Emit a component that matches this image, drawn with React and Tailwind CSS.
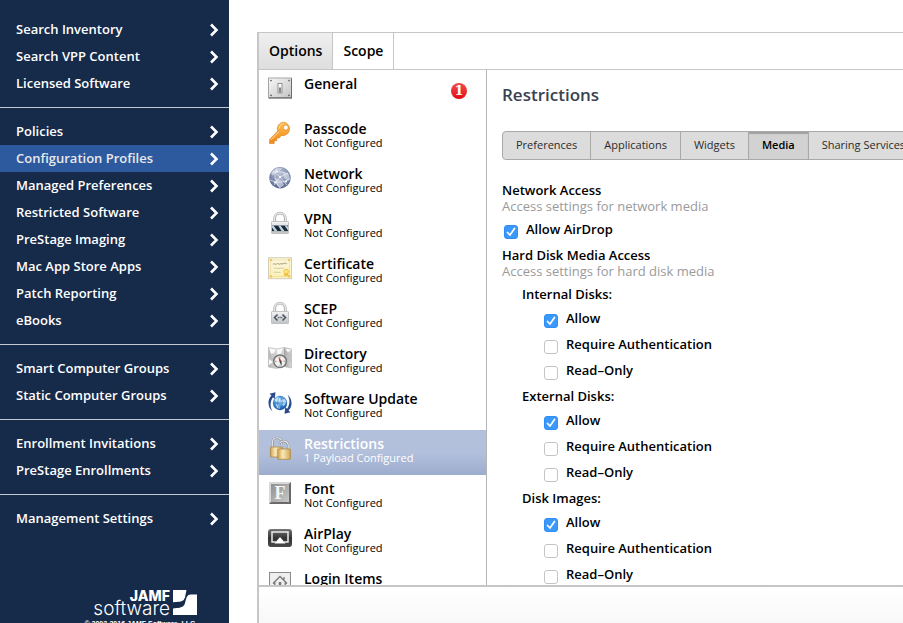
import { useState } from "react";

const menuGroups = [
  ["Search Inventory", "Search VPP Content", "Licensed Software"],
  [
    "Policies",
    "Configuration Profiles",
    "Managed Preferences",
    "Restricted Software",
    "PreStage Imaging",
    "Mac App Store Apps",
    "Patch Reporting",
    "eBooks",
  ],
  ["Smart Computer Groups", "Static Computer Groups"],
  ["Enrollment Invitations", "PreStage Enrollments"],
  ["Management Settings"],
];

function GeneralIcon() {
  return (
    <svg viewBox="0 0 24 24" className="size-6 shrink-0" aria-hidden="true">
      <defs>
        <linearGradient id="plate" x1="0" y1="0" x2="1" y2="1">
          <stop offset="0" stopColor="#f7f7f7" />
          <stop offset="1" stopColor="#c4c4c4" />
        </linearGradient>
      </defs>
      <rect x="0.5" y="2" width="23" height="20" fill="url(#plate)" stroke="#a5a5a5" />
      <path d="M1 21.8h22.6V2.5" fill="none" stroke="#6d6d6d" strokeWidth="1.2" />
      <g fill="#555">
        <circle cx="3" cy="4.6" r="0.8" />
        <circle cx="21" cy="4.6" r="0.8" />
        <circle cx="3" cy="19.4" r="0.8" />
        <circle cx="21" cy="19.4" r="0.8" />
      </g>
      <rect x="10" y="7.5" width="4" height="9.5" fill="#fafafa" stroke="#8d8d8d" strokeWidth="0.9" />
      <rect x="10.8" y="11.5" width="2.4" height="5" fill="#8a8a8a" />
    </svg>
  );
}

function KeyIcon() {
  return (
    <svg viewBox="0 0 24 24" className="size-6 shrink-0" aria-hidden="true">
      <defs>
        <linearGradient id="key" x1="0" y1="0" x2="0" y2="1">
          <stop offset="0" stopColor="#fdc04e" />
          <stop offset="1" stopColor="#f0861b" />
        </linearGradient>
      </defs>
      <path
        fillRule="evenodd"
        d="M16.2 1.2a6.7 6.7 0 0 0-6.500 8.9L1.6 18.4v4.2h4.6v-2.9h2.6v-2.7h2.4l2.1-2.500a6.800 6.800 0 1 0 2.9-13.300zM17.8 4a2.500 2.500 0 1 1 0 5 2.500 2.500 0 0 1 0-5z"
        fill="url(#key)"
        stroke="#d9791a"
        strokeWidth="0.6"
      />
      <path d="M11 7.6c.3-2.6 2.4-4.6 4.8-4.8M2.8 18.900l8-8" fill="none" stroke="#ffe0a0" strokeWidth="1" />
    </svg>
  );
}

function NetworkIcon() {
  return (
    <svg viewBox="0 0 24 24" className="size-6 shrink-0" aria-hidden="true">
      <defs>
        <radialGradient id="globe" cx="0.5" cy="0.3" r="0.7">
          <stop offset="0" stopColor="#b9c2d6" />
          <stop offset="0.6" stopColor="#8390b2" />
          <stop offset="1" stopColor="#55648e" />
        </radialGradient>
      </defs>
      <circle cx="12" cy="11.7" r="10.7" fill="url(#globe)" />
      <path d="M3.500 6c3-4 8-4.500 11-3.500l-3 2.500-4 1-3 4zM15 6l5 2 2 4-2 3-4-3zM8 12l5 2 3 5-4 3-4-4z" fill="#dfe4ee" opacity="0.6" />
      <g fill="none" stroke="#eef1f7" strokeWidth="0.7">
        <path d="M3 8c5-3 12-3 18 1M2 14c6 3 13 3 20-1M9 2c-4 5-2 14 3 20" />
        <path d="M5 5l7 6 8-4M12 11l-6 8M12 11l7 8" />
      </g>
      <g fill="#fff">
        <circle cx="9" cy="5.500" r="1" />
        <circle cx="12" cy="11" r="1" />
        <circle cx="7" cy="16.500" r="1" />
        <circle cx="18" cy="15.500" r="1" />
      </g>
    </svg>
  );
}

function LockIcon({ children }) {
  return (
    <svg viewBox="0 0 24 24" className="size-6 shrink-0" aria-hidden="true">
      <defs>
        <linearGradient id="lockBody" x1="0" y1="0" x2="0" y2="1">
          <stop offset="0" stopColor="#f4f4f4" />
          <stop offset="1" stopColor="#bfc1c4" />
        </linearGradient>
      </defs>
      <path d="M6.700 11V7.500a5.300 5.300 0 0 1 10.600 0V11" fill="none" stroke="#a9a9a9" strokeWidth="2.800" />
      <path d="M6.500 11V7.500a5.500 5.500 0 0 1 11 0V11" fill="none" stroke="#e6e6e6" strokeWidth="1.400" />
      <rect x="3.500" y="10.500" width="17" height="12" rx="0.600" fill="url(#lockBody)" stroke="#b8b8b8" strokeWidth="0.800" />
      {children}
    </svg>
  );
}

function VpnIcon() {
  return (
    <LockIcon>
      <rect x="4" y="14.500" width="16" height="5.600" fill="#20262e" />
      <path d="M4 14.500h1.500l4 5.600H6.500L4 16.500zM10 14.500h2.500l4 5.600h-3zM16.500 14.500H19l1 1.600v3.500z" fill="#b9d6ee" />
    </LockIcon>
  );
}

function ScepIcon() {
  return (
    <LockIcon>
      <path d="M9.500 13.500L6.500 16.500l3 3M14.500 13.500l3 3-3 3" fill="none" stroke="#46505c" strokeWidth="1.500" />
      <path d="M9.800 16.500h1M11.600 16.500h1M13.400 16.500h1" stroke="#46505c" strokeWidth="1.400" />
    </LockIcon>
  );
}

function CertificateIcon() {
  return (
    <svg viewBox="0 0 24 24" className="size-6 shrink-0" aria-hidden="true">
      <defs>
        <linearGradient id="paper" x1="0" y1="0" x2="0" y2="1">
          <stop offset="0" stopColor="#fdf8e2" />
          <stop offset="1" stopColor="#fbf0b4" />
        </linearGradient>
      </defs>
      <rect x="0.500" y="1.700" width="23" height="21" fill="url(#paper)" stroke="#d3ceb9" />
      <rect x="2.700" y="3.900" width="18.600" height="16.600" fill="none" stroke="#efd998" strokeWidth="0.700" />
      <g fill="#ecc865">
        <circle cx="2.900" cy="4" r="1.300" />
        <circle cx="21.100" cy="4" r="1.300" />
        <circle cx="2.900" cy="20.400" r="1.300" />
        <circle cx="21.100" cy="20.400" r="1.300" />
      </g>
      <path d="M5 8.500c1-2.500 2 1 3.500-.5s2 1 3.500 0 2.500.8 4-.6 1.500.8 3 .3" fill="none" stroke="#9c9277" strokeWidth="0.900" />
      <path d="M6 12.300c2-.8 3 .6 5 0s3 .4 5-.2M5.500 16.300c2-.6 4 .5 7 0" fill="none" stroke="#c9bf9d" strokeWidth="0.800" />
      <path d="M16.500 17l-.8 3 1.500-.5 1.200.8 1-.8 1.300.4-.7-2.900z" fill="#f0bd3a" />
      <circle cx="18.200" cy="15.600" r="2.400" fill="#fde27c" stroke="#edba3c" strokeWidth="0.800" />
    </svg>
  );
}

function DirectoryIcon() {
  return (
    <svg viewBox="0 0 24 24" className="size-6 shrink-0" aria-hidden="true">
      <defs>
        <linearGradient id="mapFold" x1="0" y1="0" x2="1" y2="0">
          <stop offset="0" stopColor="#b5b5b5" />
          <stop offset="0.350" stopColor="#d6d6d6" />
          <stop offset="0.360" stopColor="#f1f1f1" />
          <stop offset="0.680" stopColor="#cfcfcf" />
          <stop offset="0.690" stopColor="#a9a9a9" />
          <stop offset="1" stopColor="#d9d9d9" />
        </linearGradient>
      </defs>
      <path d="M.5 1.500L8.500 3 16 1.500 23.500 3v19L16 20.500 8.500 22.500.5 21z" fill="url(#mapFold)" stroke="#b0b0b0" strokeWidth="0.600" />
      <path d="M1 2l7 1.500L6 7 3 8zM9 4l6-2-2 5-3 2zM17 2.500l6 1-3 3zM1 13l4 3-4 3z" fill="#fafafa" />
      <path d="M19 9l4-3v11l-3-3z" fill="#c3c3c3" />
      <circle cx="12" cy="15.300" r="6.300" fill="#f1f1f1" stroke="#777" strokeWidth="1.500" />
      <path d="M12 10.300v1.500M12 18.800v1.500M7 15.300h1.500M15.500 15.300H17" stroke="#777" strokeWidth="0.800" />
      <path d="M10.500 10.800l3 4-2.200.8z" fill="#d6302e" />
      <path d="M13.700 20l-2.400-4.400 2.200-.8z" fill="#3d3d3d" />
    </svg>
  );
}

function UpdateIcon() {
  return (
    <svg viewBox="0 0 24 24" className="size-6 shrink-0" aria-hidden="true">
      <defs>
        <radialGradient id="updateGlobe" cx="0.45" cy="0.35" r="0.7">
          <stop offset="0" stopColor="#c4e6fb" />
          <stop offset="0.5" stopColor="#4a9be0" />
          <stop offset="1" stopColor="#0c3f94" />
        </radialGradient>
      </defs>
      <circle cx="12" cy="12" r="7.200" fill="url(#updateGlobe)" />
      <path d="M6.500 9l3-3 3 1-1 3-3 1zM13 9l4-1 1.500 4-3 3-2-2zM8 13l3 1 1 4-3-1z" fill="#e3f4fd" opacity="0.750" />
      <path d="M5 12h14M12 5c-3 4-3 10 0 14M12 5c3 4 3 10 0 14" fill="none" stroke="#2360ad" strokeWidth="0.500" />
      <path d="M7.500 1.300L1.500 2.800l2 1.600C-.8 8.500-.6 16 4.500 20.500 1.800 15.700 2 10.500 5 6.200l1.700 1.700z" fill="#2b4a8b" />
      <path d="M16.500 22.700l6-1.500-2-1.600c4.300-4.100 4.100-11.600-1-16.100 2.700 4.800 2.500 10-.5 14.300l-1.700-1.700z" fill="#2b4a8b" />
    </svg>
  );
}

function RestrictionsIcon() {
  return (
    <svg viewBox="0 0 24 24" className="size-6 shrink-0" aria-hidden="true">
      <defs>
        <linearGradient id="brass" x1="0" y1="0" x2="1" y2="0">
          <stop offset="0" stopColor="#cfa352" />
          <stop offset="0.4" stopColor="#fae8b8" />
          <stop offset="1" stopColor="#d3a556" />
        </linearGradient>
      </defs>
      <path d="M4.500 12V6.500a4.500 4.500 0 0 1 9 0V9" fill="none" stroke="#8b8d91" strokeWidth="2.200" />
      <path d="M4.300 12V6.500a4.700 4.700 0 0 1 9.400 0V9" fill="none" stroke="#e9eaec" strokeWidth="1.100" />
      <rect x="2.400" y="11" width="12" height="10" rx="0.600" fill="url(#brass)" stroke="#ab8138" strokeWidth="0.700" />
      <path d="M11.500 7.500a4.500 4.500 0 0 1 8.500 2V14" fill="none" stroke="#8b8d91" strokeWidth="2.200" />
      <path d="M11.500 7.300a4.700 4.700 0 0 1 8.700 2V14" fill="none" stroke="#e9eaec" strokeWidth="1.100" />
      <rect x="9.800" y="13" width="12.600" height="10.300" rx="0.600" fill="url(#brass)" stroke="#ab8138" strokeWidth="0.700" />
    </svg>
  );
}

function FontIcon() {
  return (
    <svg viewBox="0 0 24 24" className="size-6 shrink-0" aria-hidden="true">
      <defs>
        <linearGradient id="fontTile" x1="0" y1="0" x2="1" y2="1">
          <stop offset="0" stopColor="#8f8f8f" />
          <stop offset="1" stopColor="#c9c9c9" />
        </linearGradient>
      </defs>
      <path d="M1 1h22v22H1z" fill="#d8d8d8" />
      <path d="M23 1v22H1l2-2h18V3z" fill="#6a6a6a" />
      <rect x="3" y="3" width="18" height="18" fill="url(#fontTile)" />
      <text x="12" y="18" textAnchor="middle" fontFamily="Liberation Serif, serif" fontWeight="700" fontSize="18" fill="#f5f5f5">
        F
      </text>
    </svg>
  );
}

function AirPlayIcon() {
  return (
    <svg viewBox="0 0 24 24" className="size-6 shrink-0" aria-hidden="true">
      <defs>
        <linearGradient id="airplay" x1="0" y1="0" x2="0" y2="1">
          <stop offset="0" stopColor="#777" />
          <stop offset="0.5" stopColor="#333" />
          <stop offset="1" stopColor="#4a4a4a" />
        </linearGradient>
      </defs>
      <rect x="0" y="3" width="24" height="18" rx="3" fill="url(#airplay)" />
      <path d="M8 16H4V6h16v10h-4" fill="none" stroke="#ececec" strokeWidth="1.500" />
      <path d="M12 11l5.500 6.500h-11z" fill="#fff" />
    </svg>
  );
}

function LoginIcon() {
  return (
    <svg viewBox="0 0 24 24" className="size-6 shrink-0" aria-hidden="true">
      <rect x="1.500" y="1.500" width="21" height="21" fill="#efefef" stroke="#8a8a8a" />
      <path d="M5 12.500l7-7 7 7M6.800 11v8h10.400v-8M16 9.500V6" fill="none" stroke="#7a7a7a" strokeWidth="1.300" />
      <rect x="10.700" y="11" width="2.600" height="8" fill="#7a7a7a" />
    </svg>
  );
}

const payloads = [
  { name: "General", Icon: GeneralIcon, alerts: 1 },
  { name: "Passcode", status: "Not Configured", Icon: KeyIcon },
  { name: "Network", status: "Not Configured", Icon: NetworkIcon },
  { name: "VPN", status: "Not Configured", Icon: VpnIcon },
  { name: "Certificate", status: "Not Configured", Icon: CertificateIcon },
  { name: "SCEP", status: "Not Configured", Icon: ScepIcon },
  { name: "Directory", status: "Not Configured", Icon: DirectoryIcon },
  { name: "Software Update", status: "Not Configured", Icon: UpdateIcon },
  { name: "Restrictions", status: "1 Payload Configured", Icon: RestrictionsIcon },
  { name: "Font", status: "Not Configured", Icon: FontIcon },
  { name: "AirPlay", status: "Not Configured", Icon: AirPlayIcon },
  { name: "Login Items", status: "Not Configured", Icon: LoginIcon },
];

const restrictionTabs = ["Preferences", "Applications", "Widgets", "Media", "Sharing Services"];
const diskGroups = ["Internal Disks:", "External Disks:", "Disk Images:"];

function Sidebar() {
  return (
    <aside className="flex w-[229px] shrink-0 flex-col overflow-hidden bg-[#162a4a] text-white">
      <nav className="pt-1.5">
        {menuGroups.map((group) => (
          <ul key={group[0]} className="border-b border-[#c3cad4] py-2.5 last:border-b-0">
            {group.map((item) => (
              <li key={item}>
                <a
                  href="#"
                  className={`flex h-[27px] items-center justify-between pr-2.5 pl-4 text-[13px] font-semibold ${
                    item === "Configuration Profiles" ? "bg-[#2d5a9f] text-[#e9e9ea]" : ""
                  }`}
                >
                  {item}
                  <svg viewBox="0 0 10 14" className="h-3.5 w-2.5" aria-hidden="true">
                    <path d="M2 1.500L7.500 7 2 12.500" fill="none" stroke="#fff" strokeWidth="2.600" />
                  </svg>
                </a>
              </li>
            ))}
          </ul>
        ))}
      </nav>

      {/* logo */}
      <div className="mt-12 mr-8 flex shrink-0 flex-col items-end">
        <div className="flex items-end gap-[3px]">
          <div className="flex flex-col items-end">
            <span className="font-[Inter,sans-serif] text-[14px] leading-[12px] font-extrabold">JAMF</span>
            <span className="font-[Inter,sans-serif] text-[19px] leading-[13px] font-light">software</span>
          </div>
          <svg viewBox="0 0 24 25" className="h-[25px] w-6" aria-hidden="true">
            <path d="M0 0h13.500c-1 4-1 6.500-2 8.500-1 2.200-2.500 3-5.500 3.300L0 12.300z" fill="#fff" />
            <path d="M24 4.500V25H0v-6.500c5-.5 9-.5 11-3.200 2-2.800 1.500-8.300 4.500-10.300 1-.6 5-.5 8.500-.5z" fill="#fff" />
          </svg>
        </div>
        <p className="mt-1 font-['Liberation_Sans',sans-serif] text-[7px] leading-[10px] font-bold whitespace-nowrap">
          © 2002-2016 JAMF Software, LLC.
        </p>
      </div>
    </aside>
  );
}

function PayloadItem({ payload, selected, onSelect }) {
  const { name, status, Icon, alerts } = payload;
  return (
    <button
      type="button"
      onClick={onSelect}
      className={`flex h-[45px] w-full shrink-0 items-start gap-3 pr-[19px] pl-[9px] text-left ${
        selected ? "bg-linear-to-b from-[#b2c0dc] from-50% to-[#9dadce] text-white" : "text-black"
      }`}
    >
      <span className="pt-1.5">
        <Icon />
      </span>
      <span className="flex flex-1 flex-col pt-[7px]">
        <span className="text-sm leading-[14px] font-semibold">{name}</span>
        {status && <span className="text-[11px] leading-[13px]">{status}</span>}
      </span>
      {alerts && (
        <span className="mt-[13px] flex size-4 items-center justify-center rounded-full bg-linear-to-b from-[#f0484c] to-[#e0000a] font-['DejaVu_Serif',serif] text-[13px] leading-4 font-bold text-white">
          {alerts}
        </span>
      )}
    </button>
  );
}

function CheckRow({ label, defaultChecked }) {
  return (
    <label className="flex h-[26px] items-center gap-2 text-[13px] font-semibold">
      <span className="mt-[3px] grid size-3.5 shrink-0">
        <input
          type="checkbox"
          defaultChecked={defaultChecked}
          className="peer col-start-1 row-start-1 size-3.5 appearance-none rounded-[3px] border border-[#c4c4c4] bg-white checked:border-[#2f8df5] checked:bg-[#3b99fc]"
        />
        <svg
          viewBox="0 0 14 14"
          className="pointer-events-none invisible col-start-1 row-start-1 size-3.5 peer-checked:visible"
          aria-hidden="true"
        >
          <path d="M3.500 7.500L6 10l4.500-6.500" fill="none" stroke="#fff" strokeWidth="1.700" strokeLinecap="round" />
        </svg>
      </span>
      {label}
    </label>
  );
}

function MediaSettings() {
  return (
    <div className="pt-[22px]">
      <h3 className="text-[13px] leading-4 font-semibold">Network Access</h3>
      <p className="text-[13px] leading-4 text-[#9a9a9a]">Access settings for network media</p>
      <div className="pt-[3px] pb-1 pl-0.5">
        <CheckRow label="Allow AirDrop" defaultChecked />
      </div>

      <h3 className="text-[13px] leading-4 font-semibold">Hard Disk Media Access</h3>
      <p className="text-[13px] leading-4 text-[#9a9a9a]">Access settings for hard disk media</p>
      <div className="pt-[3px] pl-5">
        {diskGroups.map((group) => (
          <fieldset key={group}>
            <legend className="h-6 text-[13px] leading-6 font-semibold">{group}</legend>
            <div className="pl-[22px]">
              <CheckRow label="Allow" defaultChecked />
              <CheckRow label="Require Authentication" />
              <CheckRow label="Read–Only" />
            </div>
          </fieldset>
        ))}
      </div>
    </div>
  );
}

export default function App() {
  const [selected, setSelected] = useState("Restrictions");
  const [tab, setTab] = useState("Media");

  return (
    <div className="flex h-screen overflow-hidden bg-white font-['Open_Sans',sans-serif] text-black">
      <Sidebar />

      <main className="flex min-w-0 flex-1 flex-col overflow-hidden pt-8 pl-7">
        {/* top tabs */}
        <div className="flex h-[38px] shrink-0 border-y border-l-2 border-[#c6c6c6] text-sm font-semibold">
          <button type="button" className="border-r border-[#c6c6c6] bg-linear-to-b from-[#efefef] to-[#dedede] px-2.5">
            Options
          </button>
          <button type="button" className="border-r border-[#c6c6c6] px-2.5">
            Scope
          </button>
        </div>

        <div className="flex min-h-0 flex-1 overflow-hidden border-b-2 border-l-2 border-[#c6c6c6]">
          <div className="flex w-[228px] shrink-0 flex-col overflow-hidden border-r border-[#b5b5b5]">
            {payloads.map((payload) => (
              <PayloadItem
                key={payload.name}
                payload={payload}
                selected={payload.name === selected}
                onSelect={() => setSelected(payload.name)}
              />
            ))}
          </div>

          <section className="min-w-0 flex-1 overflow-hidden pt-[13px] pl-[15px]">
            <h2 className="text-[17px] leading-6 font-semibold text-[#39424e]">Restrictions</h2>
            <div className="mt-6 flex h-[29px] w-max overflow-hidden rounded border border-[#a9a9a9] bg-[#dcdcdc] text-[11px] text-[#2b2b2b]">
              {restrictionTabs.map((name) => (
                <button
                  key={name}
                  type="button"
                  onClick={() => setTab(name)}
                  className={`border-r border-[#a9a9a9] px-[13px] last:border-r-0 ${
                    name === tab ? "bg-[#d2d2d2] font-semibold text-black shadow-[inset_0_2px_1px_#a0a0a0]" : ""
                  }`}
                >
                  {name}
                </button>
              ))}
            </div>
            <MediaSettings />
          </section>
        </div>

        <footer className="h-9 shrink-0 border-l-2 border-[#c6c6c6] bg-linear-to-b from-white to-[#f8f8f8]" />
      </main>
    </div>
  );
}
